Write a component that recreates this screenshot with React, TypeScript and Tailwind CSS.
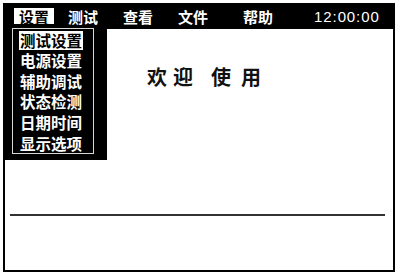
import React from 'react'

const cjk = "font-['Noto_Sans_CJK_SC','Noto_Sans',sans-serif]"

const topItems = [
  { label: '测试', ml: 'ml-[14px]' },
  { label: '查看', ml: 'ml-[25px]' },
  { label: '文件', ml: 'ml-[25px]' },
  { label: '帮助', ml: 'ml-[35px]' },
]

const menuItems = ['测试设置', '电源设置', '辅助调试', '状态检测', '日期时间', '显示选项']

export default function App() {
  return (
    <div className={`relative w-[398px] h-[275px] bg-white ${cjk}`}>
      <div className="absolute left-[3px] top-[3px] w-[392px] h-[269px] flex flex-col">
        {/* top menu bar */}
        <div className="h-[26px] bg-black flex items-center text-white text-[15px] font-bold leading-none">
          <span className="ml-[11px] h-[16px] px-[5px] flex items-center bg-white text-black">设置</span>
          {topItems.map(item => (
            <span key={item.label} className={item.ml}>{item.label}</span>
          ))}
          <span className="ml-[41px] font-['Liberation_Sans',sans-serif] font-normal tracking-[0.9px] text-[15px]">12:00:00</span>
        </div>

        {/* content */}
        <div className="flex-1 flex flex-col border-2 border-t-0 border-black">
          <div className="pt-[38px] pl-[142px] flex text-[20px] leading-[20px] font-bold text-[#111]">
            <span>欢</span>
            <span className="ml-[6px]">迎</span>
            <span className="ml-[18px]">使</span>
            <span className="ml-[10px]">用</span>
          </div>
          <div className="mt-[127px] ml-[5px] mr-[8px] h-[2px] bg-[#333]" />
        </div>
      </div>

      {/* dropdown */}
      <div className="absolute left-[3px] top-[29px] w-[104px] h-[131px] bg-black">
        <div className="ml-[9px] w-[82px] h-[125px] border border-t-0 border-[#d8d8d8] pt-[1px] pl-[7px]">
          {menuItems.map((m, i) => (
            <div key={m} className="h-[20.6px] flex items-center text-[15.5px] font-bold leading-none">
              {i === 0 ? (
                <span className="h-[19px] px-[1px] -ml-[1px] flex items-center bg-white text-black">{m}</span>
              ) : (
                <span className="text-white">{m}</span>
              )}
            </div>
          ))}
        </div>
      </div>
      <div className="absolute left-[12px] top-[28px] w-[82px] h-px bg-[#d8d8d8]" />
    </div>
  )
}
